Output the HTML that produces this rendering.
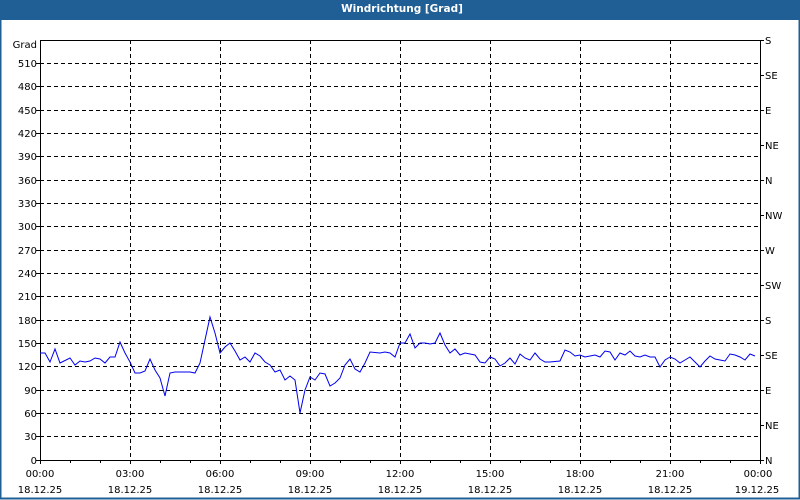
<!DOCTYPE html>
<html><head><meta charset="utf-8"><style>
html,body{margin:0;padding:0;background:#fff;}
svg{display:block;}
text{font-family:"DejaVu Sans","Liberation Sans",sans-serif;font-size:10px;fill:#000;}
</style></head><body>
<svg width="800" height="500" xmlns="http://www.w3.org/2000/svg">
<rect x="0" y="0" width="800" height="500" fill="#fff"/>
<rect x="0.5" y="0.5" width="799" height="498" fill="none" stroke="#1f5f96" stroke-width="2"/>
<rect x="0" y="0" width="800" height="20" fill="#1f5f96"/>
<text x="402" y="12" text-anchor="middle" style="font-weight:bold;fill:#fff;font-size:10.5px">Windrichtung [Grad]</text>
<g stroke="#000" stroke-width="1" stroke-dasharray="4,3" fill="none" shape-rendering="crispEdges">
<path d="M40 63.5H760M40 86.5H760M40 110.5H760M40 133.5H760M40 156.5H760M40 180.5H760M40 203.5H760M40 226.5H760M40 250.5H760M40 273.5H760M40 296.5H760M40 320.5H760M40 343.5H760M40 366.5H760M40 390.5H760M40 413.5H760M40 436.5H760"/>
<path d="M130.5 40V460M220.5 40V460M310.5 40V460M400.5 40V460M490.5 40V460M580.5 40V460M670.5 40V460"/>
</g>
<g stroke="#000" stroke-width="1" fill="none" shape-rendering="crispEdges">
<path d="M40.5 40V460.5H760.5V40M40 40.5H760"/>
<path d="M36 63.5H40M36 86.5H40M36 110.5H40M36 133.5H40M36 156.5H40M36 180.5H40M36 203.5H40M36 226.5H40M36 250.5H40M36 273.5H40M36 296.5H40M36 320.5H40M36 343.5H40M36 366.5H40M36 390.5H40M36 413.5H40M36 436.5H40M36 460.5H40"/>
<path d="M760 40.5H764M760 75.5H764M760 110.5H764M760 145.5H764M760 180.5H764M760 215.5H764M760 250.5H764M760 285.5H764M760 320.5H764M760 355.5H764M760 390.5H764M760 425.5H764M760 460.5H764"/>
<path d="M40.5 460V464M70.5 460V463M100.5 460V463M130.5 460V464M160.5 460V463M190.5 460V463M220.5 460V464M250.5 460V463M280.5 460V463M310.5 460V464M340.5 460V463M370.5 460V463M400.5 460V464M430.5 460V463M460.5 460V463M490.5 460V464M520.5 460V463M550.5 460V463M580.5 460V464M610.5 460V463M640.5 460V463M670.5 460V464M700.5 460V463M730.5 460V463M760.5 460V464"/>
</g>
<polyline fill="none" stroke="#0000ee" stroke-width="1" points="40,353 45,353 50,362 55,349 60,363 70,358 75,365 80,361 85,362 90,361 95,358 100,359 105,363 110,357 115,357 120,342 125,353 130,362 135,373 140,373 145,371 150,359 155,370 160,378 165,396 170,373 175,372 180,372 185,372 190,372 195,373 200,363 205,340 210,317 215,333 220,353 225,347 230,343 235,351 240,360 245,357 250,362 255,353 260,356 265,362 270,365 275,372 280,370 285,380 290,376 295,380 300,413 305,390 310,377 315,380 320,373 325,374 330,386 335,383 340,378 345,365 350,359 355,369 360,372 365,363 370,352 380,353 385,352 390,353 395,357 400,343 405,343 410,334 415,348 420,343 425,343 430,344 435,343 440,333 445,345 450,353 455,349 460,355 465,353 470,354 475,355 480,362 485,363 490,357 495,359 500,366 505,363 510,358 515,364 520,354 525,358 530,360 535,353 540,359 545,362 550,362 560,361 565,350 570,352 575,356 580,355 585,357 590,356 595,355 600,357 605,351 610,352 615,360 620,353 625,355 630,351 635,356 640,357 645,355 650,357 655,357 660,367 665,360 670,357 675,359 680,363 685,360 690,357 695,362 700,367 705,361 710,356 715,359 720,360 725,361 730,354 735,355 740,357 745,360 750,354 755,356"/>
<g text-anchor="end">
<text x="37" y="48">Grad</text>
<text x="37" y="67">510</text><text x="37" y="90">480</text><text x="37" y="114">450</text><text x="37" y="137">420</text><text x="37" y="160">390</text><text x="37" y="184">360</text><text x="37" y="207">330</text><text x="37" y="230">300</text><text x="37" y="254">270</text><text x="37" y="277">240</text><text x="37" y="300">210</text><text x="37" y="324">180</text><text x="37" y="347">150</text><text x="37" y="370">120</text><text x="37" y="394">90</text><text x="37" y="417">60</text><text x="37" y="440">30</text><text x="37" y="464">0</text>
</g>
<g>
<text x="765" y="44">S</text><text x="765" y="79">SE</text><text x="765" y="114">E</text><text x="765" y="149">NE</text><text x="765" y="184">N</text><text x="765" y="219">NW</text><text x="765" y="254">W</text><text x="765" y="289">SW</text><text x="765" y="324">S</text><text x="765" y="359">SE</text><text x="765" y="394">E</text><text x="765" y="429">NE</text><text x="765" y="464">N</text>
</g>
<g text-anchor="middle">
<text x="40" y="477">00:00</text><text x="130" y="477">03:00</text><text x="220" y="477">06:00</text><text x="310" y="477">09:00</text><text x="400" y="477">12:00</text><text x="490" y="477">15:00</text><text x="580" y="477">18:00</text><text x="670" y="477">21:00</text><text x="758" y="477">00:00</text>
<text x="40" y="493">18.12.25</text><text x="130" y="493">18.12.25</text><text x="220" y="493">18.12.25</text><text x="310" y="493">18.12.25</text><text x="400" y="493">18.12.25</text><text x="490" y="493">18.12.25</text><text x="580" y="493">18.12.25</text><text x="670" y="493">18.12.25</text><text x="757" y="493">19.12.25</text>
</g>
</svg>
</body></html>
